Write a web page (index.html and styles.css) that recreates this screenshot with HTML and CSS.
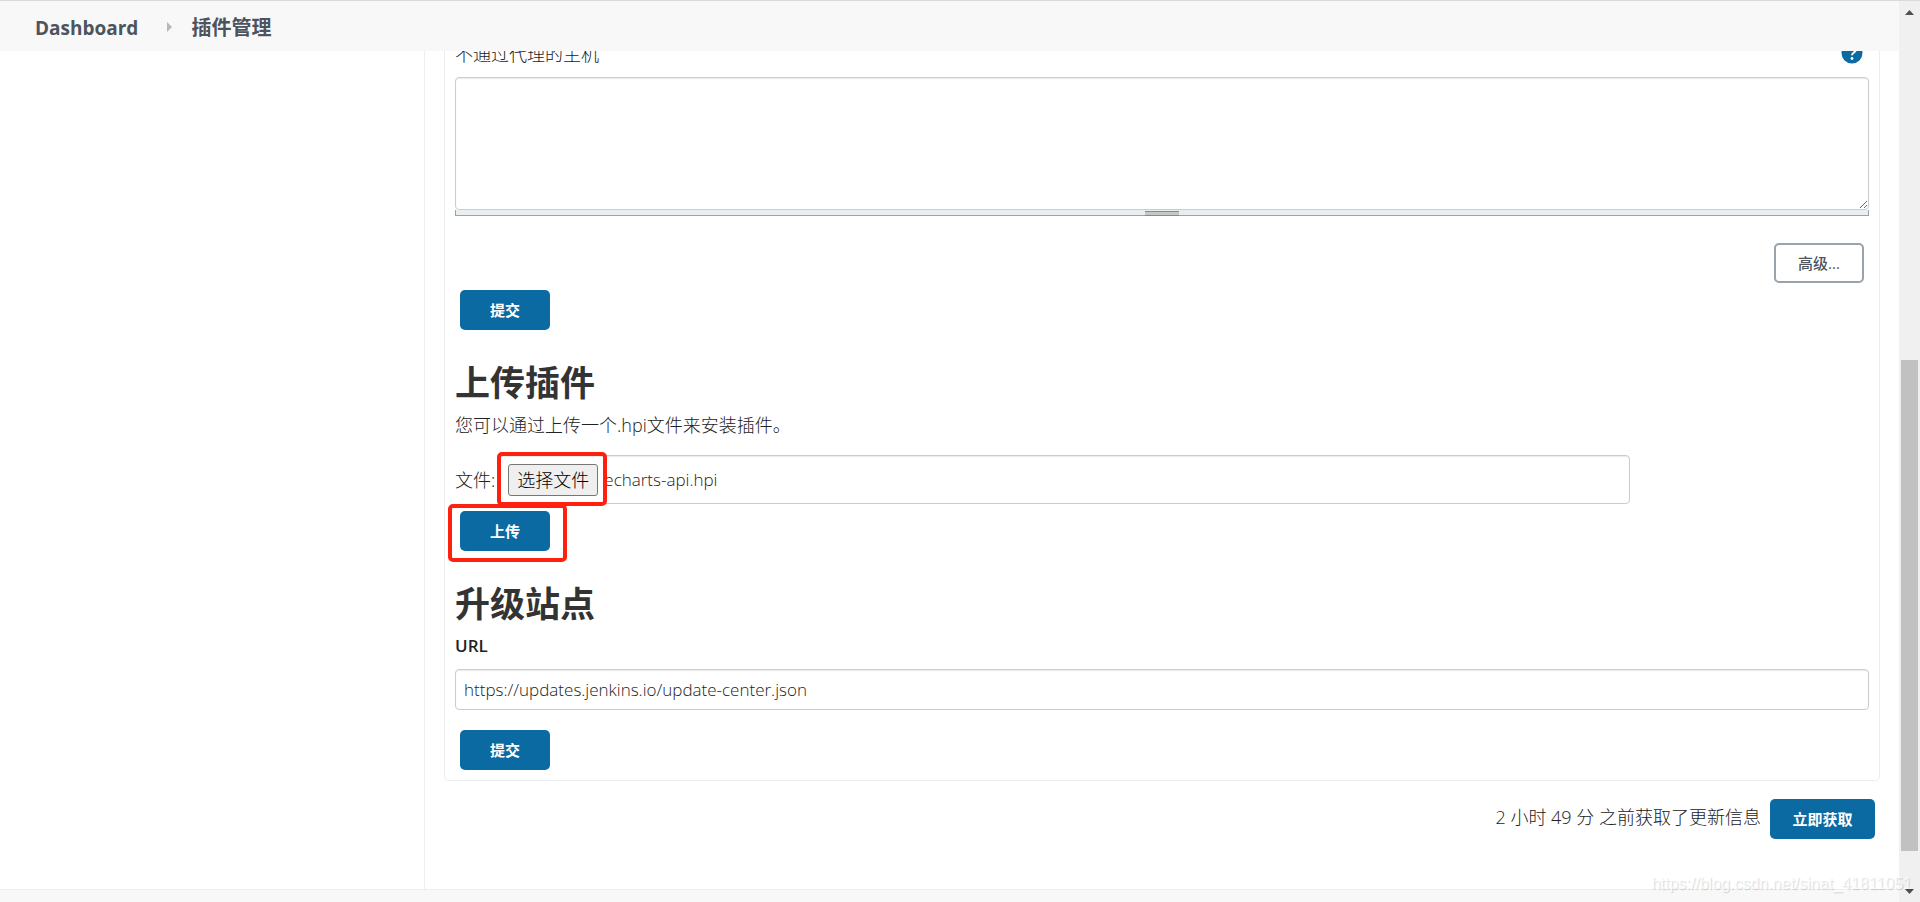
FILE: index.html
```html
<!DOCTYPE html>
<html lang="zh-CN">
<head>
<meta charset="utf-8">
<title>插件管理</title>
<link rel="stylesheet" href="styles.css">
</head>
<body>
<div class="viewport">
  <div class="page">
    <header class="breadcrumbs">
      <a href="#">Dashboard</a>
      <svg class="chevron" width="6" height="12" viewBox="0 0 6 12"><path d="M0 0l5 5-5 5z" fill="#b4b8bb"/></svg>
      <a href="#">插件管理</a>
    </header>
    <div class="body">
      <aside class="side"></aside>
      <main class="main">
        <section class="panel">
          <form class="form proxy-form">
            <div class="label-row">
              <label for="no-proxy">不通过代理的主机</label>
              <a class="help" href="#" aria-label="帮助">
                <svg width="22" height="22" viewBox="0 0 22 22"><circle cx="11" cy="11" r="10.5" fill="#0b6aa2"/><path d="M7.500 8.300c0-4.600 7.200-4.400 7.200-.4 0 2.600-3.700 2.700-3.700 5.300" fill="none" stroke="#fff" stroke-width="2"/><circle cx="11" cy="16.500" r="1.400" fill="#fff"/></svg>
              </a>
            </div>
            <textarea id="no-proxy" class="field area"></textarea>
            <div class="grip"><span class="grip-bar"></span></div>
            <div class="advanced"><button type="button" class="btn outline">高级...</button></div>
            <button type="button" class="btn submit">提交</button>
          </form>
          <form class="form">
            <h1>上传插件</h1>
            <p class="intro">您可以通过上传一个.hpi文件来安装插件。</p>
            <div class="file-row">
              <label for="file">文件:</label>
              <div class="field file-box">
                <button type="button" class="choose">选择文件</button>
                <span class="file-name">echarts-api.hpi</span>
                <input id="file" class="file-input" type="file">
                <span class="mark mark-file"></span>
              </div>
            </div>
            <div class="upload">
              <button type="button" class="btn submit">上传</button>
              <span class="mark mark-upload"></span>
            </div>
          </form>
          <form class="form">
            <h1>升级站点</h1>
            <label class="url-label" for="url">URL</label>
            <input id="url" class="field url" type="text" value="https://updates.jenkins.io/update-center.json">
            <button type="button" class="btn submit">提交</button>
          </form>
        </section>
        <div class="refresh">
          <span class="refresh-text">2 小时 49 分 之前获取了更新信息</span>
          <button type="button" class="btn check">立即获取</button>
        </div>
      </main>
    </div>
    <footer class="footer"></footer>
  </div>
  <div class="scrollbar">
    <svg class="arrow" width="9" height="5" viewBox="0 0 9 5"><path d="M4.500 0L9 5H0z" fill="#505050"/></svg>
    <div class="track"><div class="thumb"></div></div>
    <svg class="arrow" width="9" height="5" viewBox="0 0 9 5"><path d="M0 0h9L4.500 5z" fill="#505050"/></svg>
  </div>
  <div class="watermark">https://blog.csdn.net/sinat_41811051</div>
</div>
</body>
</html>
```
FILE: styles.css
```css
* { box-sizing: border-box; }
body {
  margin: 0;
  font: 300 18px/24px "Open Sans", "Noto Sans CJK SC", sans-serif;
  color: #222;
  background: #fff;
}
button, input, textarea { font: inherit; color: inherit; }
a { color: inherit; text-decoration: none; }
.viewport {
  position: relative;
  display: flex;
  height: 100vh;
  overflow: hidden;
  border-top: 1px solid #d9d9de;
}
.page { flex: 1; display: flex; flex-direction: column; min-width: 0; }
.breadcrumbs {
  display: flex;
  align-items: center;
  flex: none;
  height: 50px;
  padding: 3px 35px 0;
  background: #f8f8f8;
  color: #4d545d;
  font-size: 20px;
  font-weight: 700;
}
.breadcrumbs a:first-child { font-size: 19px; }
.chevron { margin: 0 18px 0 29px; }
.body { flex: 1; display: flex; min-height: 0; overflow: hidden; }
.side { width: 425px; flex: none; border-right: 1px solid #ecefef; }
.main { flex: 1; min-width: 0; padding: 0 19px; }
.panel {
  border: 1px solid #e8eded;
  border-top: 0;
  border-radius: 0 0 5px 5px;
  padding: 0 10px 10px;
}
.form { margin: 0; }
.proxy-form { margin-top: -9px; }
.label-row { display: flex; justify-content: space-between; padding-right: 6px; }
.help { display: flex; height: 22px; }
.field {
  display: block;
  border: 1px solid #ccc;
  border-radius: 4px;
  background: #fff;
  box-shadow: inset 0 1px 1px rgba(0, 0, 0, 0.08);
}
.area { width: 100%; height: 133px; margin-top: 11px; resize: vertical; }
.grip {
  display: flex;
  justify-content: center;
  height: 6px;
  padding-top: 1px;
  background: #e9eef1;
  border: 1px solid #98a3ab;
  border-top: 0;
}
.grip-bar {
  width: 34px;
  height: 5px;
  flex: none;
  background: #c3c9c7;
  border: solid #868b89;
  border-width: 1px 0;
}
.advanced { display: flex; justify-content: flex-end; margin: 27px 5px 7px; }
.btn {
  height: 40px;
  min-width: 90px;
  padding: 0 20px;
  border: 0;
  border-radius: 5px;
  background: #0b6aa2;
  color: #fff;
  font-size: 15px;
  font-weight: 700;
}
.outline { background: #fff; border: 2px solid #98a3ab; color: #4d545d; font-weight: 500; }
.submit { display: block; margin-left: 5px; }
h1 { margin: 32px 0 0; font-size: 35px; line-height: 42px; font-weight: 700; color: #333; }
.intro { margin: 9px 0 18px; }
.file-row { display: flex; align-items: center; gap: 4px; }
.file-box {
  position: relative;
  display: flex;
  align-items: center;
  gap: 6px;
  width: 80%;
  height: 49px;
  padding: 0 8px;
}
.file-name { font-size: 17px; }
.choose {
  width: 90px;
  height: 32px;
  padding: 0;
  border: 1px solid #767676;
  border-radius: 3px;
  background: #efefef;
  color: #000;
}
.file-input { position: absolute; inset: 0; width: 100%; opacity: 0; }
.mark { position: absolute; border: 4px solid #ff2010; border-radius: 5px; pointer-events: none; }
.mark-file { left: -3px; top: -4px; width: 110px; height: 54px; }
.upload { position: relative; margin-top: 7px; }
.mark-upload { left: -7px; top: -7px; width: 119px; height: 58px; }
.url-label { display: block; margin-top: 1px; padding: 8px 0 11px; font-size: 17px; font-weight: 600; }
.url { width: 100%; height: 41px; padding: 0 8px; margin-bottom: 20px; font-size: 17px; }
.refresh {
  display: flex;
  justify-content: flex-end;
  align-items: flex-start;
  gap: 9px;
  padding: 18px 5px;
}
.refresh-text { padding-top: 6px; }
.check { min-width: 105px; }
.footer { flex: none; height: 13px; background: #f8f8f8; border-top: 1px solid #ecefef; }
.scrollbar {
  display: flex;
  flex-direction: column;
  align-items: center;
  flex: none;
  width: 21px;
  padding: 9px 0 8px;
  background: #f0f0f0;
}
.track { flex: 1; align-self: stretch; margin: 6px 2px; }
.thumb { height: 57%; margin-top: 339px; background: #c1c1c1; }
.watermark {
  position: absolute;
  right: 8px;
  bottom: 8px;
  font: 400 16px/20px "Liberation Sans", sans-serif;
  color: rgba(255, 255, 255, 0.8);
  text-shadow: 1px 1px 1px rgba(0, 0, 0, 0.16);
}
```
